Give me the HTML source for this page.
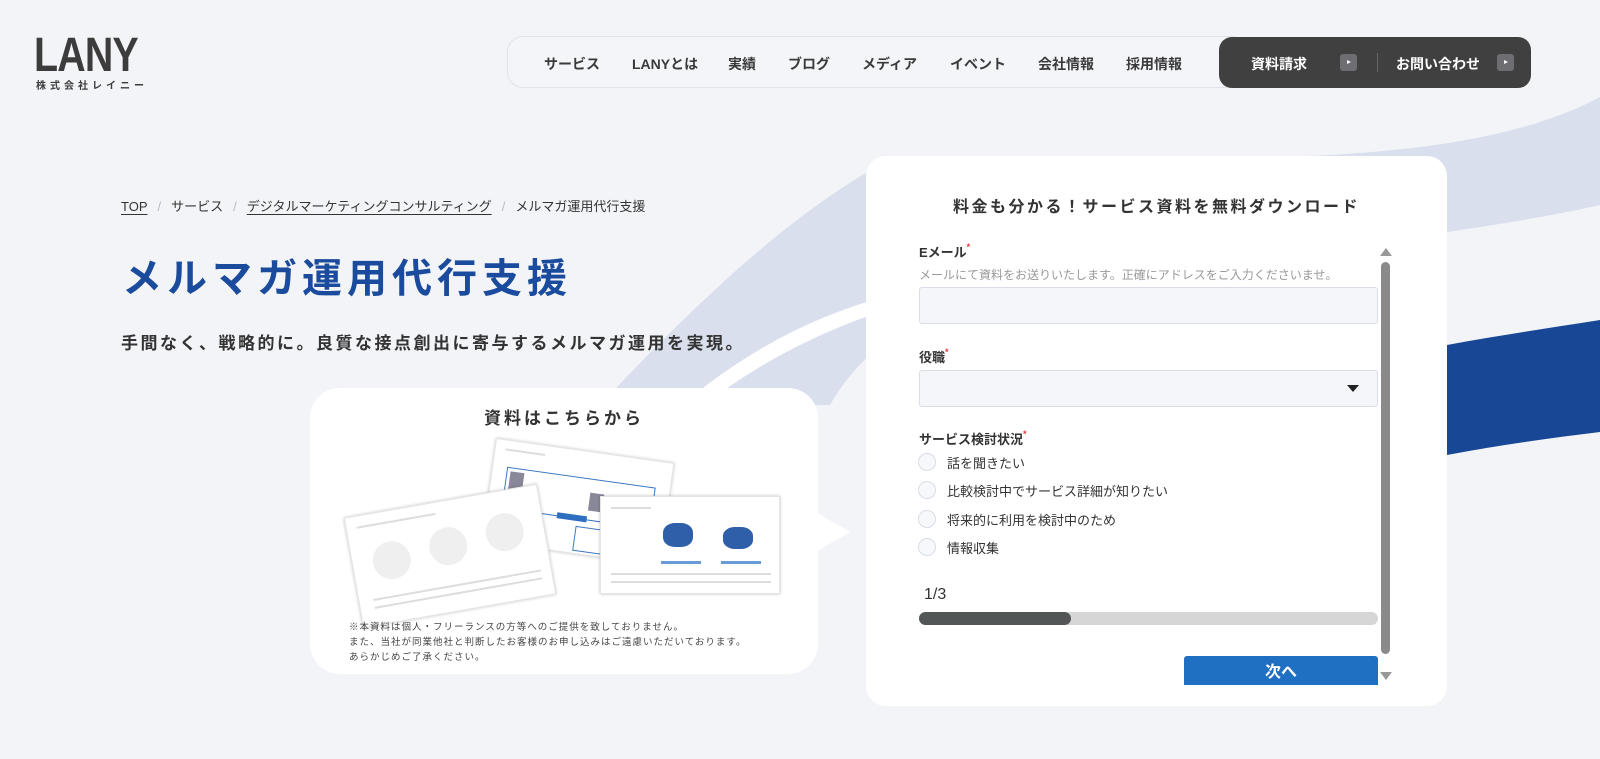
<!DOCTYPE html>
<html><head><meta charset="utf-8">
<style>
*{margin:0;padding:0;box-sizing:border-box}
body{width:1600px;height:759px;overflow:hidden;background:#f3f4f8;font-family:"Liberation Sans","Noto Sans CJK JP",sans-serif;color:#333;position:relative}
.abs{position:absolute}
.logo{left:34px;top:32px;font-size:48px;font-weight:bold;color:#3c3c3c;letter-spacing:-1px;transform:scaleX(0.82);transform-origin:left;line-height:48px}
.logosub{left:36px;top:77px;font-size:10px;font-weight:bold;letter-spacing:4px;color:#3c3c3c}
.nav{left:507px;top:36px;width:740px;height:52px;border:1px solid #e1e3ea;border-radius:16px;background:#f4f5f9}
.nav span{position:absolute;top:17px;font-size:14px;font-weight:bold;color:#3a3a3a}
.cta{left:1219px;top:37px;width:312px;height:51px;background:#404040;border-radius:13px;color:#fff;font-weight:bold;font-size:14px}
.cta span{position:absolute;top:17px}
.cta i{position:absolute;top:17px;width:17px;height:17px;background:#6e6e72;border-radius:3px}
.cta i:after{content:"";position:absolute;left:7px;top:6px;border-left:4px solid #fff;border-top:2.5px solid transparent;border-bottom:2.5px solid transparent}
.bc{left:121px;top:196px;font-size:13px;color:#333}
.bc u{text-underline-offset:3px}
.bc .s{color:#bbb;margin:0 10px}
h1{position:absolute;left:122px;top:246px;font-size:40px;color:#1a4b9c;letter-spacing:5px;font-weight:bold}
.lead{left:121px;top:329px;font-size:17px;font-weight:bold;letter-spacing:2.5px;color:#333}
.card2{left:310px;top:388px;width:508px;height:286px;background:#fff;border-radius:30px}
.card2 .t{position:absolute;left:0;width:100%;top:16px;text-align:center;font-size:17px;font-weight:bold;letter-spacing:3px;color:#333}
.note{left:349px;top:620px;font-size:9.5px;color:#444;line-height:15px;letter-spacing:1px}
.slide{position:absolute;background:#fff;box-shadow:0 0 3px rgba(0,0,0,.25);border:1px solid #e4e4e4}
.form{left:866px;top:156px;width:581px;height:550px;background:#fff;border-radius:20px}
.ft{left:0;width:100%;top:37px;text-align:center;font-size:16px;font-weight:bold;letter-spacing:2.5px;color:#333}
.lbl{font-size:13px;font-weight:bold;color:#333}
.lbl b{color:#e33;font-size:9px;vertical-align:top}
.inp{left:53px;width:459px;height:37px;background:#f4f6f9;border:1px solid #d8dde6;border-radius:3px}
.radio{left:52px;width:18px;height:18px;border:1px solid #d8dde6;border-radius:50%;background:#f7f8fb}
.rt{left:81px;font-size:13px;color:#333}
.ln{position:absolute;height:2px;background:#ddd}
</style></head><body>
<svg class="abs" style="left:0;top:0" width="1600" height="759">
<path d="M1600 97 C1520 140 1400 155 1250 158 C1100 160 950 150 880 165 C780 220 680 320 600 405 L830 405 C850 370 880 340 920 320 C1100 270 1450 240 1600 205 Z" fill="#d9dfec"/>
<path d="M690 398 C750 350 810 318 880 298 L880 312 C820 332 765 360 710 400 Z" fill="#fff"/>
<path d="M1447 345 C1500 335 1550 328 1600 320 L1600 432 C1550 438 1500 445 1447 455 Z" fill="#184895"/>
</svg>
<div class="abs logo">LANY</div>
<div class="abs logosub">株式会社レイニー</div>
<div class="abs nav">
<span style="left:36px">サービス</span><span style="left:124px">LANYとは</span><span style="left:220px">実績</span><span style="left:280px">ブログ</span><span style="left:354px">メディア</span><span style="left:442px">イベント</span><span style="left:530px">会社情報</span><span style="left:618px">採用情報</span>
</div>
<div class="abs cta">
<span style="left:32px">資料請求</span><i style="left:121px"></i>
<div class="abs" style="left:158px;top:16px;width:1px;height:19px;background:#666"></div>
<span style="left:177px">お問い合わせ</span><i style="left:278px"></i>
</div>
<div class="abs bc"><u>TOP</u><span class="s">/</span>サービス<span class="s">/</span><u>デジタルマーケティングコンサルティング</u><span class="s">/</span>メルマガ運用代行支援</div>
<h1>メルマガ運用代行支援</h1>
<div class="abs lead">手間なく、戦略的に。良質な接点創出に寄与するメルマガ運用を実現。</div>
<svg class="abs" style="left:812px;top:510px" width="40" height="50"><path d="M0 0 L38 22 L0 44 Z" fill="#fff"/></svg>
<div class="abs card2">
<div class="t">資料はこちらから</div>
<div class="slide" style="left:178px;top:62px;width:180px;height:104px;transform:rotate(8deg)">
<div class="ln" style="left:10px;top:8px;width:40px"></div>
<div class="abs" style="left:14px;top:26px;width:150px;height:42px;border:1px solid #3a78c2"></div>
<div class="abs" style="left:18px;top:30px;width:14px;height:18px;background:#889"></div>
<div class="abs" style="left:100px;top:40px;width:14px;height:18px;background:#889"></div>
<div class="abs" style="left:70px;top:64px;width:30px;height:6px;background:#2f6fc0"></div>
<div class="abs" style="left:90px;top:75px;width:70px;height:25px;border:1px solid #3a78c2"></div>
</div>
<div class="slide" style="left:290px;top:108px;width:180px;height:98px">
<div class="ln" style="left:10px;top:10px;width:40px"></div>
<div class="abs" style="left:62px;top:26px;width:30px;height:24px;background:#2e5fa8;border-radius:40%"></div>
<div class="abs" style="left:122px;top:30px;width:30px;height:22px;background:#2e5fa8;border-radius:40%"></div>
<div class="ln" style="left:60px;top:64px;width:40px;height:3px;background:#6a9ad8"></div>
<div class="ln" style="left:120px;top:64px;width:40px;height:3px;background:#6a9ad8"></div>
<div class="ln" style="left:10px;top:76px;width:160px"></div>
<div class="ln" style="left:10px;top:84px;width:160px"></div>
</div>
<div class="slide" style="left:42px;top:112px;width:196px;height:112px;transform:rotate(-10deg)">
<div class="ln" style="left:10px;top:10px;width:80px"></div>
<div class="abs" style="left:20px;top:30px;width:38px;height:38px;background:#efefef;border-radius:50%"></div>
<div class="abs" style="left:78px;top:26px;width:38px;height:38px;background:#efefef;border-radius:50%"></div>
<div class="abs" style="left:136px;top:22px;width:38px;height:38px;background:#efefef;border-radius:50%"></div>
<div class="ln" style="left:14px;top:84px;width:170px"></div>
<div class="ln" style="left:14px;top:92px;width:170px"></div>
</div>
</div>
<div class="abs note">※本資料は個人・フリーランスの方等へのご提供を致しておりません。<br>また、当社が同業他社と判断したお客様のお申し込みはご遠慮いただいております。<br>あらかじめご了承ください。</div>
<div class="abs form">
<div class="abs ft">料金も分かる！サービス資料を無料ダウンロード</div>
<div class="abs lbl" style="left:53px;top:86px">Eメール<b>*</b></div>
<div class="abs" style="left:53px;top:110px;font-size:12px;color:#999">メールにて資料をお送りいたします。正確にアドレスをご入力くださいませ。</div>
<div class="abs inp" style="top:131px"></div>
<div class="abs lbl" style="left:53px;top:191px">役職<b>*</b></div>
<div class="abs inp" style="top:214px"><div class="abs" style="right:18px;top:14px;border-top:7px solid #222;border-left:6px solid transparent;border-right:6px solid transparent"></div></div>
<div class="abs lbl" style="left:53px;top:273px">サービス検討状況<b>*</b></div>
<div class="abs radio" style="top:297px"></div><div class="abs rt" style="top:297px">話を聞きたい</div>
<div class="abs radio" style="top:325px"></div><div class="abs rt" style="top:325px">比較検討中でサービス詳細が知りたい</div>
<div class="abs radio" style="top:354px"></div><div class="abs rt" style="top:354px">将来的に利用を検討中のため</div>
<div class="abs radio" style="top:382px"></div><div class="abs rt" style="top:382px">情報収集</div>
<div class="abs" style="left:58px;top:430px;font-size:16px;color:#333">1/3</div>
<div class="abs" style="left:53px;top:456px;width:459px;height:13px;background:#d6d6d6;border-radius:7px"><div style="width:152px;height:13px;background:#525657;border-radius:7px"></div></div>
<div class="abs" style="left:318px;top:500px;width:194px;height:29px;background:#1f6fc2;border-radius:3px 3px 0 0;color:#fff;font-weight:bold;font-size:16px;text-align:center;line-height:34px">次へ</div>
<div class="abs" style="left:514px;top:92px;border-bottom:8px solid #999;border-left:6px solid transparent;border-right:6px solid transparent"></div>
<div class="abs" style="left:515px;top:106px;width:9px;height:392px;background:#8a8a8a;border-radius:5px"></div>
<div class="abs" style="left:514px;top:516px;border-top:8px solid #999;border-left:6px solid transparent;border-right:6px solid transparent"></div>
</div>
</body></html>
